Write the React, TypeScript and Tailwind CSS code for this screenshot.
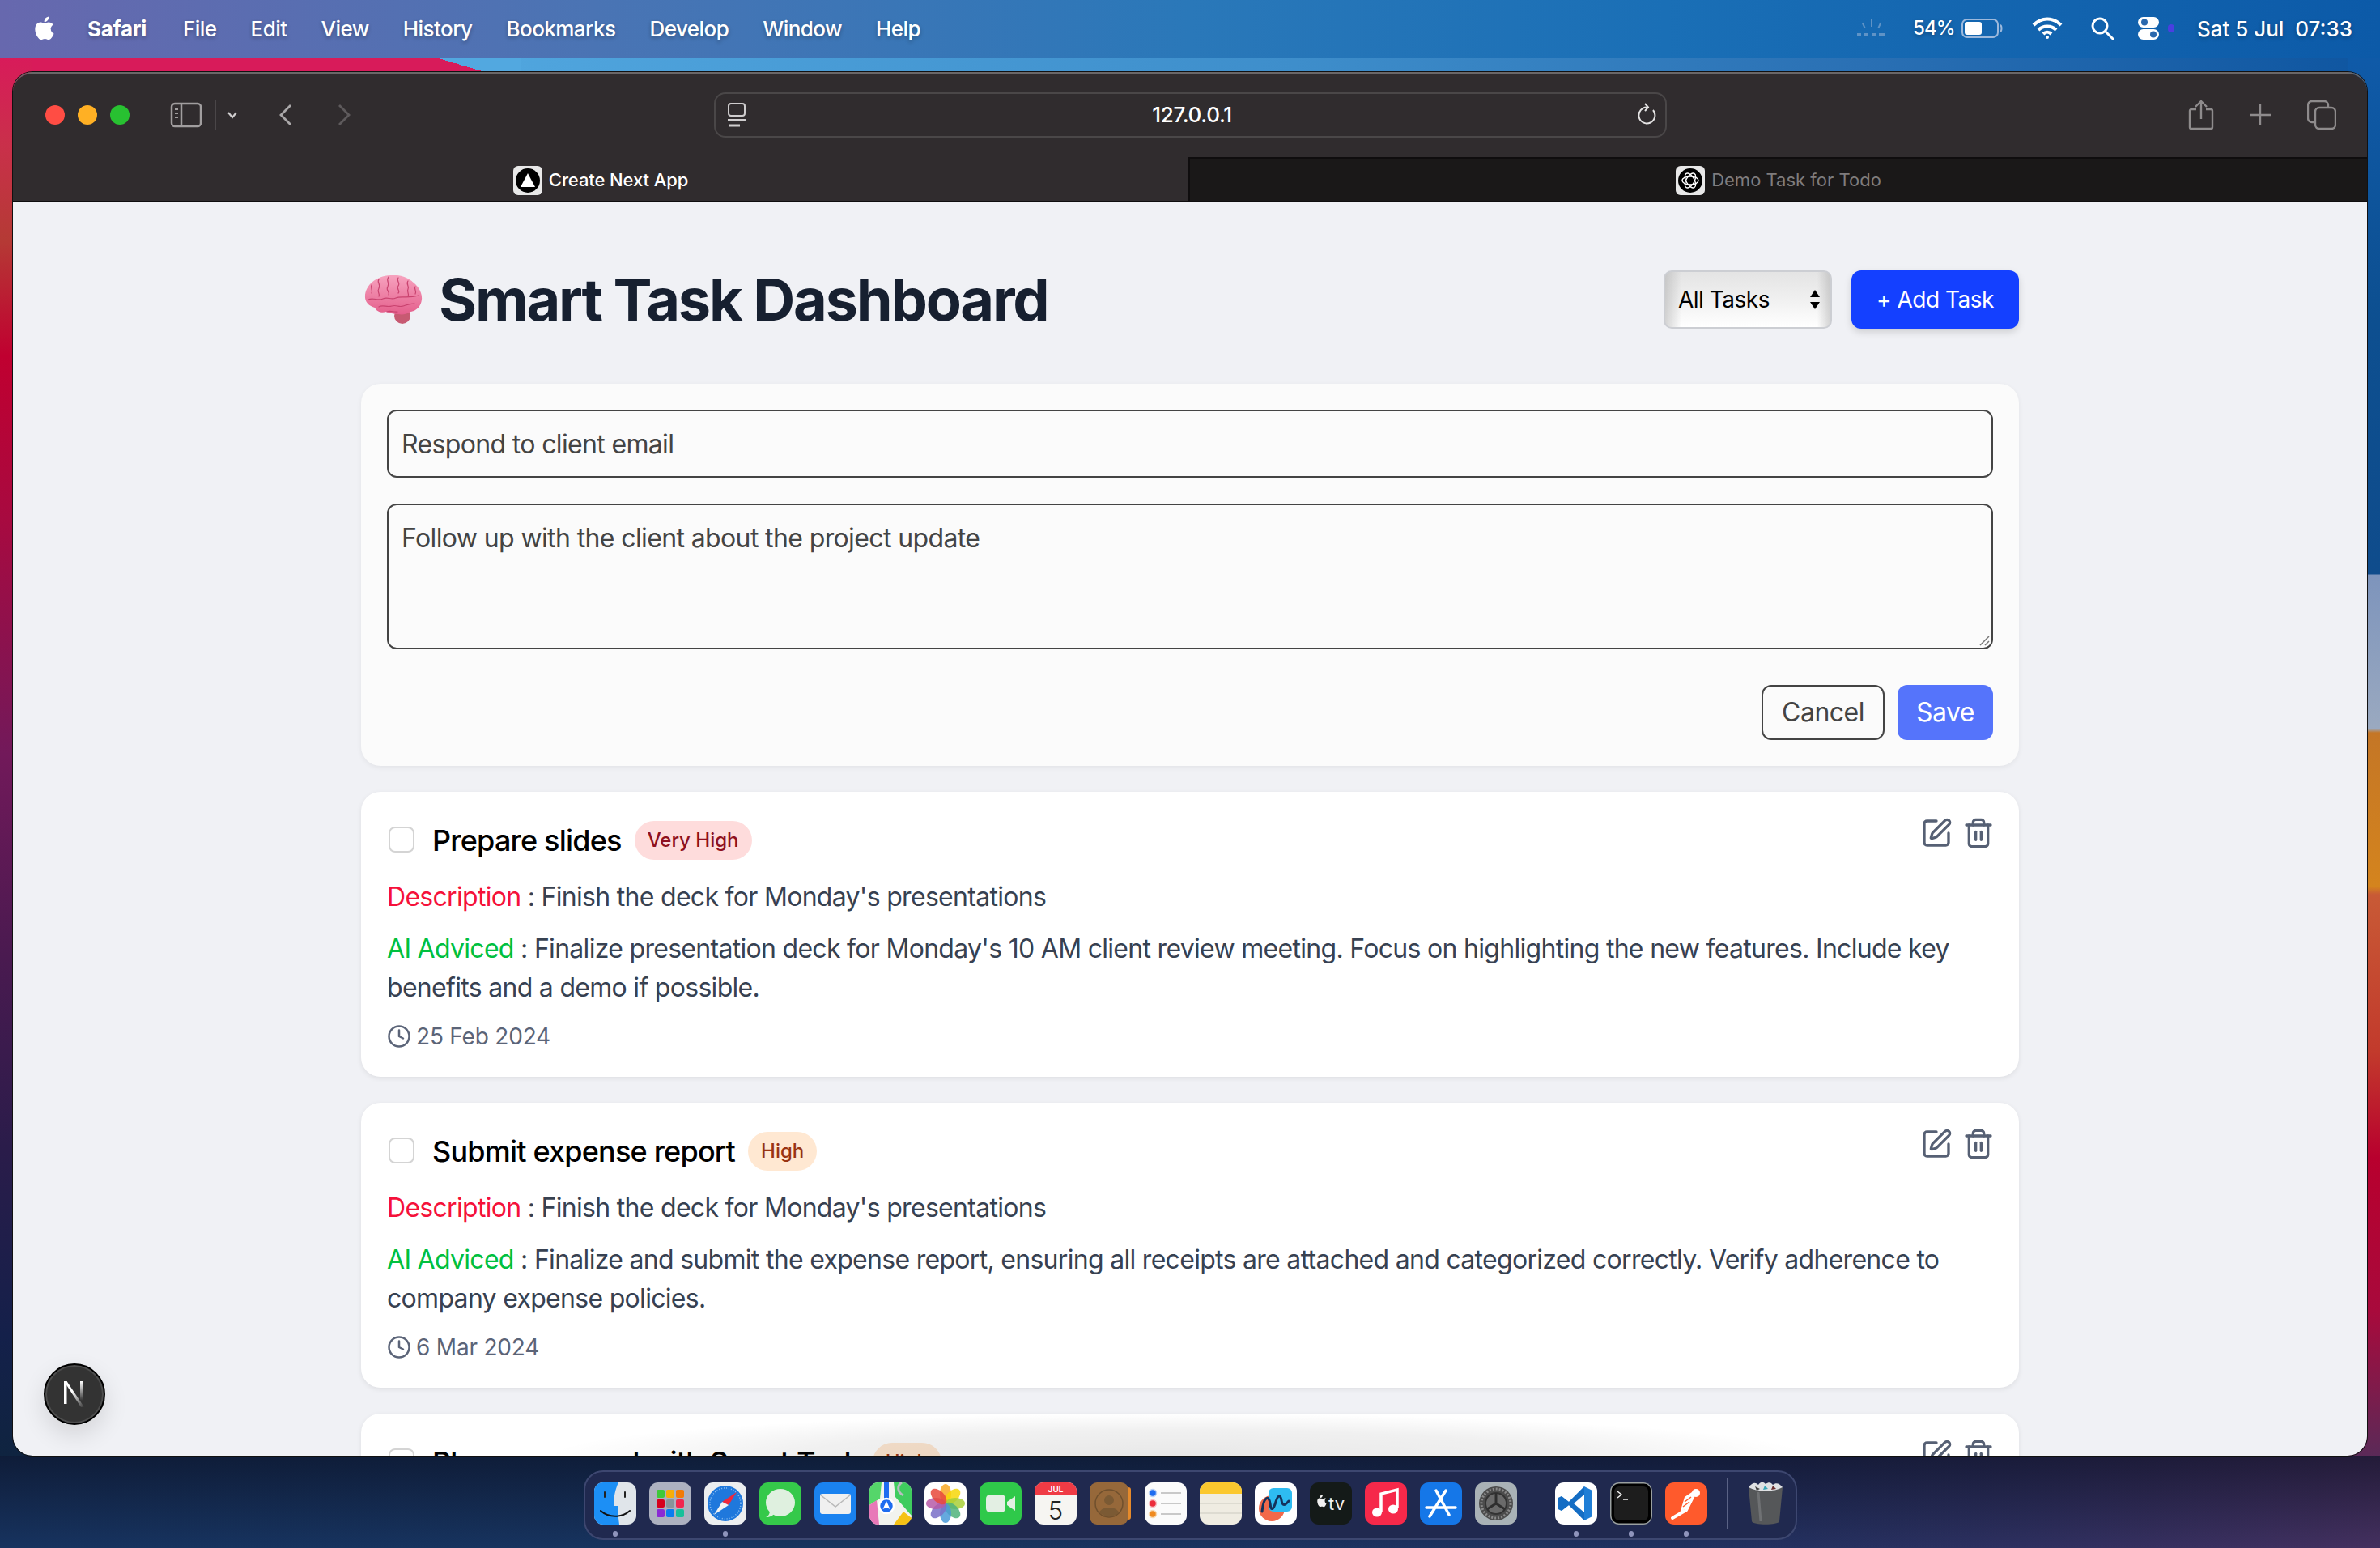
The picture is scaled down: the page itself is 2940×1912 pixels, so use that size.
import React from "react";
import { SquarePen, Trash2, Clock } from "lucide-react";

const menu = ["File", "Edit", "View", "History", "Bookmarks", "Develop", "Window", "Help"];

function Apple() {
  return (
    <svg width="26" height="32" viewBox="0 0 26 32" fill="#fff">
      <path d="M21.6 16.9c0-3.6 3-5.4 3.1-5.5-1.7-2.5-4.3-2.8-5.2-2.9-2.2-.2-4.3 1.3-5.4 1.3-1.1 0-2.9-1.3-4.7-1.3-2.4 0-4.7 1.4-5.9 3.600-2.500 4.400-.6 10.900 1.800 14.400 1.200 1.700 2.600 3.600 4.500 3.600 1.800-.1 2.500-1.200 4.700-1.200s2.800 1.200 4.700 1.100c1.900 0 3.200-1.700 4.400-3.500 1.400-2 1.900-3.900 2-4-.1-.1-3.800-1.500-3.800-5.600z" />
      <path d="M18 6c1-1.200 1.700-2.900 1.500-4.600-1.500.1-3.200 1-4.300 2.200-.9 1.100-1.700 2.800-1.500 4.500 1.700.1 3.300-.9 4.300-2.100z" />
    </svg>
  );
}

function StatusIcons() {
  return (
    <>
      <svg width="38" height="30" viewBox="0 0 38 30" fill="#7fa6cf" className="mr-[32px] opacity-70">
        <rect x="18" y="3" width="2" height="10" />
        <rect x="8" y="8" width="2" height="7" transform="rotate(-25 9 11)" />
        <rect x="28" y="8" width="2" height="7" transform="rotate(25 29 11)" />
        <rect x="1" y="21" width="5" height="4" />
        <rect x="10" y="21" width="5" height="4" />
        <rect x="19" y="21" width="5" height="4" />
        <rect x="28" y="21" width="8" height="4" />
      </svg>
      <span className="text-[24px] font-medium tracking-[-0.8px] text-white">54%</span>
      <svg width="52" height="26" viewBox="0 0 52 26" className="ml-[8px]">
        <rect x="1" y="2" width="44" height="22" rx="6" fill="none" stroke="#9db9dc" strokeWidth="2" />
        <rect x="4" y="5" width="21" height="16" rx="3" fill="#fff" />
        <path d="M48 9c2 1 2 7 0 8" fill="none" stroke="#9db9dc" strokeWidth="2" />
      </svg>
      <svg width="38" height="28" viewBox="0 0 38 28" fill="none" stroke="#fff" strokeWidth="4" className="ml-[35px]">
        <path d="M2 10c10-10 24-10 34 0" />
        <path d="M8 16c6-6 16-6 22 0" />
        <path d="M14 21c3-3 7-3 10 0" />
        <circle cx="19" cy="25" r="2" fill="#fff" stroke="none" />
      </svg>
      <svg width="30" height="30" viewBox="0 0 30 30" fill="none" stroke="#fff" strokeWidth="3" className="ml-[34px]">
        <circle cx="12" cy="12" r="9" />
        <path d="M19 19l9 9" strokeLinecap="round" />
      </svg>
      <svg width="28" height="28" viewBox="0 0 28 28" className="ml-[28px]">
        <rect x="1" y="0" width="26" height="13" rx="6.500" fill="#fff" />
        <circle cx="9" cy="6.500" r="4" fill="#2a68ad" />
        <rect x="1" y="15" width="26" height="13" rx="6.500" fill="#fff" />
        <circle cx="20" cy="21.500" r="4" fill="#2a68ad" />
      </svg>
      <span className="ml-[10px] h-[10px] w-[8px] rounded-full bg-[#4a3fe0]" />
      <span className="ml-[28px] whitespace-pre text-[26px] font-medium text-white">Sat 5 Jul  07:33</span>
    </>
  );
}

function MenuBar() {
  return (
    <div className="flex h-[72px] items-center bg-[linear-gradient(90deg,#6768ae_0%,#4a74b4_25%,#2a78b9_50%,#1a6fb6_70%,#0c5aa8_100%)] pb-[2px] pl-[41px] pr-[34px] [text-shadow:0_2px_5px_rgba(0,0,0,0.3)]">
      <Apple />
      <span className="ml-[41px] text-[26px] font-bold tracking-[-0.3px] text-white">Safari</span>
      <div className="ml-[45px] flex gap-[42px] text-[26px] font-medium tracking-[-0.55px] text-white">
        {menu.map((m) => (
          <span key={m}>{m}</span>
        ))}
      </div>
      <div className="ml-auto flex items-center">
        <StatusIcons />
      </div>
    </div>
  );
}

function Toolbar() {
  return (
    <div className="flex h-[103px] items-center bg-[#302c2e] pb-[2px] pl-[40px] pr-[38px]">
      <span className="h-[24px] w-[24px] rounded-full bg-[#ff4d44]" />
      <span className="ml-[16px] h-[24px] w-[24px] rounded-full bg-[#ffb024]" />
      <span className="ml-[16px] h-[24px] w-[24px] rounded-full bg-[#28c131]" />
      <svg width="40" height="32" viewBox="0 0 40 32" fill="none" stroke="#a19e9f" strokeWidth="2.500" className="ml-[50px]">
        <rect x="2" y="2" width="36" height="28" rx="4" />
        <path d="M14 2v28" />
        <path d="M6 9h4M6 14h4M6 19h4" strokeWidth="2" />
      </svg>
      <span className="ml-[16px] h-[36px] w-px bg-[#4a4648]" />
      <svg width="14" height="10" viewBox="0 0 14 10" fill="none" stroke="#cfcdce" strokeWidth="2.200" className="ml-[13px]">
        <path d="M2 2l5 6 5-6" />
      </svg>
      <svg width="18" height="28" viewBox="0 0 18 28" fill="none" stroke="#aaa8a9" strokeWidth="2.800" className="ml-[50px]">
        <path d="M15 2L3 14l12 12" />
      </svg>
      <svg width="18" height="28" viewBox="0 0 18 28" fill="none" stroke="#5e5a5c" strokeWidth="2.800" className="ml-[54px]">
        <path d="M3 2l12 12L3 26" />
      </svg>
      <div className="ml-[448px] flex h-[56px] w-[1177px] items-center rounded-[14px] border-2 border-[#4a4748] pl-[14px] pr-[10px]">
        <svg width="24" height="30" viewBox="0 0 24 30" fill="none" stroke="#cfcdce" strokeWidth="2">
          <rect x="2" y="1" width="20" height="15" rx="3" />
          <path d="M1 21h22" />
          <path d="M2 28h14" strokeWidth="3" />
        </svg>
        <span className="flex-1 text-center text-[26px] font-medium tracking-[-0.3px] text-white">127.0.0.1</span>
        <svg width="24" height="30" viewBox="0 0 24 30" fill="none" stroke="#e4e3e3" strokeWidth="2">
          <path d="M19 9a10 10 0 1 1-7-3.500" />
          <path d="M9 1l4 4.500-4 4.500" />
        </svg>
      </div>
      <div className="ml-auto flex items-center">
        <svg width="32" height="38" viewBox="0 0 32 38" fill="none" stroke="#8e8b8c" strokeWidth="2.400">
          <path d="M10 12H4a2 2 0 0 0-2 2v20a2 2 0 0 0 2 2h24a2 2 0 0 0 2-2V14a2 2 0 0 0-2-2h-6" />
          <path d="M16 24V2M9 9l7-7 7 7" />
        </svg>
        <svg width="28" height="28" viewBox="0 0 28 28" fill="none" stroke="#8e8b8c" strokeWidth="2.400" className="ml-[43px]">
          <path d="M14 1v26M1 14h26" />
        </svg>
        <svg width="36" height="36" viewBox="0 0 36 36" fill="none" stroke="#8e8b8c" strokeWidth="2.400" className="ml-[44px]">
          <rect x="1" y="1" width="25" height="26" rx="5" />
          <rect x="10" y="9" width="25" height="26" rx="5" fill="#302c2e" />
        </svg>
      </div>
    </div>
  );
}

function Tabs() {
  return (
    <div className="flex h-[56px] border-b-2 border-[#0f0d0e]">
      <div className="flex w-[1452px] items-center justify-center gap-[8px] bg-[#302c2e] pt-[3px]">
        <span className="flex h-[36px] w-[36px] items-center justify-center rounded-[6px] bg-[#e8e8e8]">
          <svg width="32" height="32" viewBox="0 0 32 32">
            <circle cx="16" cy="16" r="15" fill="#000" />
            <path d="M16 7l9 17H7z" fill="#fff" />
          </svg>
        </span>
        <span className="text-[22px] font-medium tracking-[-0.1px] text-white">Create Next App</span>
      </div>
      <div className="flex flex-1 items-center justify-center gap-[8px] border-l-2 border-t-2 border-[#0f0d0e] bg-[#1a1818] pt-[1px]">
        <span className="flex h-[36px] w-[36px] items-center justify-center rounded-[6px] bg-[#e8e8e8]">
          <svg width="32" height="32" viewBox="0 0 32 32" fill="none">
            <circle cx="16" cy="16" r="15" fill="#000" />
            <g stroke="#fff" strokeWidth="1.400">
              <ellipse cx="16" cy="16" rx="10" ry="5" />
              <ellipse cx="16" cy="16" rx="10" ry="5" transform="rotate(60 16 16)" />
              <ellipse cx="16" cy="16" rx="10" ry="5" transform="rotate(120 16 16)" />
            </g>
          </svg>
        </span>
        <span className="text-[22px] text-[#7f7c7d]">Demo Task for Todo</span>
      </div>
    </div>
  );
}

function Brain() {
  return (
    <svg width="72" height="60" viewBox="0 0 72 60">
      <defs>
        <linearGradient id="brainfill" x1="0" y1="0" x2="0" y2="1">
          <stop offset="0" stopColor="#f7a3bf" />
          <stop offset="1" stopColor="#e45f8c" />
        </linearGradient>
      </defs>
      <ellipse cx="47" cy="50" rx="10" ry="10" fill="#c75a72" />
      <path d="M1 28C0 13 14 1 32 0c9-1 18 1 25 6 9 6 15 15 14 24-1 9-7 14-14 15-4 3-10 4-15 3-6 0-11-2-15-3-5 2-12 0-14-5C7 38 2 35 1 28z" fill="url(#brainfill)" />
      <g fill="none" stroke="#c9436f" strokeWidth="1.200" strokeLinecap="round">
        <path d="M30 2c-4 5 2 7-1 12s3 6 1 10" />
        <path d="M18 5c-3 4 3 6 0 11s2 6 0 10" />
        <path d="M9 12c-2 4 2 6 0 10" />
        <path d="M42 3c-3 4 3 6 0 10s3 6 0 9" />
        <path d="M54 7c-3 4 2 6 0 10s2 5 0 9" />
        <path d="M63 14c-2 3 2 5 0 9" />
        <path d="M5 30c6-3 12 2 18-1s10 2 16-1 14 1 28-3" />
        <path d="M18 39c5-3 10 1 16-1s8 2 14 0 8-3 14-3" />
        <path d="M28 45c5-2 8 1 13 0" />
      </g>
    </svg>
  );
}

function Badge({ label, kind }: { label: string; kind: "vh" | "h" }) {
  return (
    <span
      className={
        kind === "vh"
          ? "flex h-[48px] items-center rounded-full bg-[#fedcdc] px-[16px] text-[24px] font-medium text-[#8f1020]"
          : "flex h-[48px] items-center rounded-full bg-[#ffe8d2] px-[16px] text-[24px] font-medium text-[#9a3412]"
      }
    >
      {label}
    </span>
  );
}

function TaskCard({ title, badge, kind, advice, date }: { title: string; badge: string; kind: "vh" | "h"; advice: string; date: string }) {
  return (
    <div className="rounded-[24px] bg-white px-[32px] pb-[30px] pt-[32px] shadow-[0_2px_6px_rgba(0,0,0,0.08)]">
      <div className="flex h-[56px] items-center justify-between">
        <div className="flex items-center">
          <span className="ml-[2px] mt-[-2px] h-[32px] w-[32px] rounded-[8px] border-2 border-[#d4d4d4] bg-white" />
          <span className="ml-[22px] text-[36px] font-medium leading-[56px] tracking-[-0.8px] text-black">{title}</span>
          <span className="ml-[16px]">
            <Badge label={badge} kind={kind} />
          </span>
        </div>
        <div className="mr-[-2px] mt-[-18px] flex items-center gap-[12px] text-[#566074]">
          <SquarePen size={40} strokeWidth={2} />
          <Trash2 size={40} strokeWidth={2} />
        </div>
      </div>
      <p className="mt-[18px] text-[32px] leading-[48px] tracking-[-0.7px] text-[#374151]">
        <span className="text-[#f5113a]">Description</span> : Finish the deck for Monday's presentations
      </p>
      <p className="mt-[16px] text-[32px] leading-[48px] tracking-[-0.7px] text-[#374151]">
        <span className="text-[#00c040]">AI Adviced</span> : {advice}
      </p>
      <div className="mt-[16px] flex h-[40px] items-center gap-[6px] text-[28px] leading-[40px] tracking-[-0.2px] text-[#5b6478]">
        <Clock size={30} strokeWidth={2} />
        <span>{date}</span>
      </div>
    </div>
  );
}

function PageContent() {
  return (
    <div className="relative h-[1548px] overflow-hidden rounded-b-[24px] bg-[#f0f1f5] font-['Inter',sans-serif]">
      <div className="ml-[430px] w-[2048px] pt-[80px]">
        <div className="flex h-[80px] items-center justify-between">
          <div className="flex items-center">
            <span className="ml-[4px]">
              <Brain />
            </span>
            <h1 className="ml-[20px] text-[72px] font-bold leading-[80px] tracking-[-2.2px] text-[#172030]">Smart Task Dashboard</h1>
          </div>
          <div className="flex items-center gap-[24px]">
            <div className="flex h-[72px] w-[208px] items-center justify-between rounded-[10px] border-2 border-[#ccced3] bg-[linear-gradient(90deg,rgba(170,170,170,0.5),transparent_10%,transparent_92%,rgba(170,170,170,0.5)),linear-gradient(180deg,#e4e4e4,#f0f0f0_50%,#ffffff)] pl-[16px] pr-[12px]">
              <span className="text-[28px] tracking-[-0.5px] text-black">All Tasks</span>
              <svg width="14" height="26" viewBox="0 0 14 26" fill="#000">
                <path d="M7 1l6 9H1zM7 25l-6-9h12z" />
              </svg>
            </div>
            <div className="flex h-[72px] w-[207px] items-center justify-center rounded-[12px] bg-[#1440ff] text-[28px] tracking-[-0.5px] text-white shadow-[0_4px_10px_rgba(0,0,0,0.15)]">
              + Add Task
            </div>
          </div>
        </div>
        <div className="mt-[64px] rounded-[24px] bg-[#fbfbfb] p-[32px] shadow-[0_2px_6px_rgba(0,0,0,0.06)]">
          <input
            readOnly
            value="Respond to client email"
            className="block h-[84px] w-full rounded-[12px] border-2 border-[#444] bg-transparent px-[16px] text-[32px] tracking-[-0.65px] text-[#444] outline-none"
          />
          <div className="relative mt-[32px]">
            <textarea
              readOnly
              value="Follow up with the client about the project update"
              className="block h-[180px] w-full resize-none rounded-[12px] border-2 border-[#444] bg-transparent px-[16px] py-[18px] text-[32px] leading-[46px] tracking-[-0.62px] text-[#444] outline-none"
            />
            <svg width="14" height="14" viewBox="0 0 14 14" fill="none" stroke="#777" strokeWidth="1.500" className="absolute bottom-[4px] right-[4px]">
              <path d="M2 13L13 2M8 13l5-5" />
            </svg>
          </div>
          <div className="mt-[44px] flex justify-end gap-[16px]">
            <div className="flex h-[68px] w-[152px] items-center justify-center rounded-[12px] border-2 border-[#444] text-[32px] tracking-[-0.5px] text-[#444]">Cancel</div>
            <div className="flex h-[68px] w-[118px] items-center justify-center rounded-[12px] bg-[#5574fb] text-[32px] tracking-[-0.5px] text-white">Save</div>
          </div>
        </div>
        <div className="mt-[32px] flex flex-col gap-[32px]">
          <TaskCard
            title="Prepare slides"
            badge="Very High"
            kind="vh"
            advice="Finalize presentation deck for Monday's 10 AM client review meeting. Focus on highlighting the new features. Include key benefits and a demo if possible."
            date="25 Feb 2024"
          />
          <TaskCard
            title="Submit expense report"
            badge="High"
            kind="h"
            advice="Finalize and submit the expense report, ensuring all receipts are attached and categorized correctly. Verify adherence to company expense policies."
            date="6 Mar 2024"
          />
          <TaskCard
            title="Please proceed with Smart Task"
            badge="High"
            kind="h"
            advice="Finalize and submit the expense report, ensuring all receipts are attached."
            date="8 Mar 2024"
          />
        </div>
      </div>
      <div className="absolute bottom-0 left-[660px] h-[52px] w-[1560px] bg-[radial-gradient(ellipse_780px_52px_at_50%_100%,rgba(0,0,0,0.09),rgba(0,0,0,0.06)_60%,transparent)]" />
      <div className="absolute bottom-[38px] left-[38px] flex h-[76px] w-[76px] items-center justify-center rounded-full border-2 border-black bg-[#333] shadow-[inset_0_0_0_2px_#4d4d4d,0_12px_30px_rgba(0,0,0,0.12)]">
        <svg width="30" height="36" viewBox="0 0 30 36">
          <defs>
            <linearGradient id="nextfade" x1="0" y1="0" x2="1" y2="1">
              <stop offset="0.4" stopColor="#fff" />
              <stop offset="1" stopColor="#fff" stopOpacity="0" />
            </linearGradient>
            <linearGradient id="nextbar" x1="0" y1="0" x2="0" y2="1">
              <stop offset="0" stopColor="#fff" />
              <stop offset="1" stopColor="#fff" stopOpacity="0" />
            </linearGradient>
          </defs>
          <path d="M2 2h3.500v28H2z" fill="#fff" />
          <path d="M2 2h3.500L27 34h-4z" fill="url(#nextfade)" />
          <path d="M22 2h3.500v24H22z" fill="url(#nextbar)" />
        </svg>
      </div>
    </div>
  );
}

type IconProps = { children: React.ReactNode; dot?: boolean };

function DockItem({ children, dot }: IconProps) {
  return (
    <div className="relative h-[52px] w-[52px] shrink-0">
      <svg width="52" height="52" viewBox="0 0 52 52">
        {children}
      </svg>
      {dot ? <span className="absolute bottom-[-15px] left-[23px] h-[7px] w-[6px] rounded-full bg-[#8f94bb]" /> : null}
    </div>
  );
}

function Dock() {
  return (
    <div className="mx-auto mt-[18px] flex h-[86px] w-[1499px] items-center rounded-[24px] border-2 border-[#3d4770] bg-[#20294f] pb-[4px] pl-[11px] pr-[12px]">
      <div className="flex gap-[16px]">
        <DockItem dot>
          <rect width="52" height="52" rx="11" fill="#e0e5ea" />
          <path d="M11 0h19c-4 9-6 17-6 29h5c0 8 1 15 2 23H11A11 11 0 0 1 0 41V11A11 11 0 0 1 11 0z" fill="#1c8ff5" />
          <path d="M13 12v6M38 12v6" stroke="#222" strokeWidth="2" strokeLinecap="round" />
          <path d="M8 35c10 9 26 9 36 0" stroke="#111" strokeWidth="2" fill="none" strokeLinecap="round" />
        </DockItem>
        <DockItem>
          <rect width="52" height="52" rx="11" fill="#adb1c0" />
          {[
            [9, 9, "#3ec83a"], [21, 9, "#f6ad09"], [33, 9, "#f27a07"],
            [9, 21, "#d6001c"], [21, 21, "#87939a"], [33, 21, "#f0264f"],
            [9, 33, "#8a2bd4"], [21, 33, "#0a7df0"], [33, 33, "#18c09a"],
          ].map(([x, y, c]) => (
            <rect key={`${x}-${y}`} x={x as number} y={y as number} width="10" height="10" rx="2" fill={c as string} />
          ))}
        </DockItem>
        <DockItem dot>
          <rect width="52" height="52" rx="11" fill="#eceef0" />
          <circle cx="26" cy="26" r="22" fill="#1f78dc" />
          <circle cx="26" cy="26" r="19" fill="none" stroke="#8fc0f0" strokeWidth="1.500" strokeDasharray="1 2" />
          <path d="M40 12L22 24l8 4z" fill="#f0283c" />
          <path d="M12 40l18-12-8-4z" fill="#f2f2f2" />
        </DockItem>
        <DockItem>
          <rect width="52" height="52" rx="11" fill="#35c94a" />
          <ellipse cx="26" cy="25" rx="18" ry="17" fill="#dff0df" />
          <path d="M13 34c0 5-2 8-5 9 5 0 9-2 11-5z" fill="#dff0df" />
        </DockItem>
        <DockItem>
          <rect width="52" height="52" rx="11" fill="#1a82f0" />
          <rect x="7" y="14" width="38" height="25" rx="3" fill="#f0f0f0" />
          <path d="M7 15l19 15 19-15" fill="none" stroke="#b9b9b9" strokeWidth="1.500" />
        </DockItem>
        <DockItem>
          <rect width="52" height="52" rx="11" fill="#f2f3ee" />
          <path d="M30 0h11a11 11 0 0 1 11 11v30l-20-23z" fill="#3fcc5e" />
          <path d="M0 11A11 11 0 0 1 11 0h4L13 20 0 28z" fill="#55d66a" />
          <path d="M0 28l9-6 3 30H11A11 11 0 0 1 0 41z" fill="#e878b8" />
          <path d="M18 0h6v22h-6z" fill="#1e6cf0" />
          <path d="M30 52l12-16 10 8a11 11 0 0 1-11 8z" fill="#f6c215" />
          <circle cx="21" cy="29" r="9" fill="#1e6cf0" stroke="#fff" strokeWidth="2.500" />
          <path d="M21 23l4.500 10-4.500-2-4.500 2z" fill="#fff" />
          <path d="M40 0c-6 4-6 12 2 16" fill="none" stroke="#b9bdc0" strokeWidth="3" />
        </DockItem>
        <DockItem>
          <rect width="52" height="52" rx="11" fill="#fff" />
          {["#f9a825", "#f7d708", "#a8cf38", "#4fb37a", "#4a9ad8", "#7a70c8", "#b65aa8", "#e8483c"].map((c, i) => (
            <ellipse key={c} cx="26" cy="14" rx="7" ry="12" fill={c} opacity="0.85" transform={`rotate(${i * 45} 26 26)`} />
          ))}
        </DockItem>
        <DockItem>
          <rect width="52" height="52" rx="11" fill="#2fc94a" />
          <rect x="8" y="15" width="24" height="22" rx="5" fill="#e3efe3" />
          <path d="M34 24l10-7v18l-10-7z" fill="#e3efe3" />
        </DockItem>
        <DockItem>
          <rect width="52" height="52" rx="11" fill="#f6f5f2" />
          <path d="M0 16V11A11 11 0 0 1 11 0h30a11 11 0 0 1 11 11v5z" fill="#ef3b45" />
          <text x="26" y="12" textAnchor="middle" fontSize="10" fontWeight="600" fontFamily="Inter" fill="#fff">JUL</text>
          <text x="26" y="46" textAnchor="middle" fontSize="31" fontWeight="300" fontFamily="Inter" fill="#222">5</text>
        </DockItem>
        <DockItem>
          <path d="M46 6h2a3 3 0 0 1 3 3v34a3 3 0 0 1-3 3h-2z" fill="#e58a2b" />
          <rect width="48" height="52" rx="9" fill="#96683a" />
          <circle cx="24" cy="26" r="17" fill="none" stroke="#70502d" strokeWidth="1.500" />
          <circle cx="24" cy="22" r="6" fill="#7b5a34" />
          <path d="M12 37c3-8 21-8 24 0a17 17 0 0 1-24 0z" fill="#7b5a34" />
        </DockItem>
        <DockItem>
          <rect width="52" height="52" rx="11" fill="#fbfbfb" />
          <circle cx="10" cy="13" r="4.500" fill="#1e6cf0" stroke="#b8d0f5" strokeWidth="1.500" />
          <circle cx="10" cy="26" r="4.500" fill="#ec2d3c" stroke="#f6c0c4" strokeWidth="1.500" />
          <circle cx="10" cy="39" r="4.500" fill="#ef8a1f" stroke="#f7d8b0" strokeWidth="1.500" />
          <path d="M20 13h25M20 26h25M20 39h25" stroke="#c9c9c9" strokeWidth="2" />
        </DockItem>
        <DockItem>
          <rect width="52" height="52" rx="11" fill="#efece2" />
          <path d="M0 14V11A11 11 0 0 1 11 0h30a11 11 0 0 1 11 11v3z" fill="#fbc82e" />
          <path d="M0 26h52M0 38h52" stroke="#d8d5cb" strokeWidth="1.500" />
        </DockItem>
        <DockItem>
          <rect width="52" height="52" rx="11" fill="#fff" />
          <circle cx="21" cy="32" r="16" fill="#f2694a" />
          <rect x="17" y="7" width="29" height="29" rx="6" fill="#2ebcf2" />
          <path d="M9 36c2-20 9-20 10-10s4 8 7-2 6-8 7-2 3 8 9 1" fill="none" stroke="#14325c" strokeWidth="3" strokeLinecap="round" />
        </DockItem>
        <DockItem>
          <rect width="52" height="52" rx="11" fill="#141a18" />
          <text x="33" y="34" textAnchor="middle" fontSize="22" fontFamily="Inter" fill="#f0f0f0">tv</text>
          <path d="M13 19c-1-2 1-4 3-4 0 2-1 4-3 4zM16 20c2 0 3-1 4 0-2 1-2 5 .5 6-1 3-2.500 5-4 4-1-.5-2-.5-3 0-3 1-6-8-3-10 1.500-1 3 .2 5.500 0z" fill="#f0f0f0" />
        </DockItem>
        <DockItem>
          <rect width="52" height="52" rx="11" fill="#f6294a" />
          <path d="M20 36V14l20-5v23" fill="none" stroke="#fff" strokeWidth="3.500" />
          <ellipse cx="15" cy="37" rx="6" ry="5.500" fill="#fff" />
          <ellipse cx="35" cy="33" rx="6" ry="5.500" fill="#fff" />
        </DockItem>
        <DockItem>
          <rect width="52" height="52" rx="11" fill="#1577e8" />
          <path d="M20 10l16 30M32 10L12 42M8 31h36" stroke="#fff" strokeWidth="3.500" strokeLinecap="round" />
        </DockItem>
        <DockItem>
          <rect width="52" height="52" rx="11" fill="#a9b2b6" />
          <circle cx="26" cy="26" r="21" fill="#4c4c4c" />
          <circle cx="26" cy="26" r="18" fill="none" stroke="#8a8a8a" strokeWidth="3" strokeDasharray="2 2" />
          <circle cx="26" cy="26" r="13" fill="#6a6a6a" stroke="#333" strokeWidth="2" />
          <path d="M26 26V13M26 26l11 7M26 26l-11 7" stroke="#2e2e2e" strokeWidth="3" />
        </DockItem>
      </div>
      <span className="mx-[23px] h-[62px] w-px bg-[#5a6285]" />
      <div className="flex gap-[16px]">
        <DockItem dot>
          <rect width="52" height="52" rx="11" fill="#fff" />
          <path d="M36 5l10 5v32l-10 5L17 28l-9 7-4-2V19l4-2 9 7z" fill="#1f7ed6" />
          <path d="M36 5l-19 19-9-7-4 2v14l4 2 9-7 19 19z" fill="#0d63b8" opacity="0.6" />
          <path d="M36 15L23 26l13 11z" fill="#fff" />
        </DockItem>
        <DockItem dot>
          <rect width="52" height="52" rx="11" fill="#9aa0a0" />
          <rect x="1.500" y="1.500" width="49" height="49" rx="9" fill="#000" />
          <rect x="5" y="5" width="42" height="42" rx="6" fill="#1d1d1d" />
          <path d="M9 11l5 4-5 4" fill="none" stroke="#eee" strokeWidth="1.500" />
          <path d="M16 21h6" stroke="#eee" strokeWidth="1.500" />
        </DockItem>
        <DockItem dot>
          <rect width="52" height="52" rx="11" fill="#ff5a2c" />
          <path d="M9 44l17-10 11-22" fill="none" stroke="#fff" strokeWidth="4" strokeLinecap="round" />
          <path d="M18 38l6-20 12-8-4 16z" fill="#fff" />
          <circle cx="38" cy="13" r="5" fill="#fff" />
          <path d="M22 30l8-6M24 24l8-6" stroke="#ff5a2c" strokeWidth="1.500" />
        </DockItem>
      </div>
      <span className="mx-[24px] h-[62px] w-px bg-[#5a6285]" />
      <svg width="46" height="56" viewBox="0 0 46 56" className="shrink-0">
        <path d="M2 8c10 5 32 5 42 0l-4 42c-1 5-33 5-34 0z" fill="#555759" />
        <path d="M14 14l3 36" stroke="#6f7173" strokeWidth="3" />
        <path d="M2 8c4-5 8-7 12-3 3-4 6-4 9-1 4-3 7-2 9 1 4-3 8-2 12 3-10 6-32 6-42 0z" fill="#dfe1e3" />
        <path d="M10 7l6 3-4 2z" fill="#444" />
        <path d="M22 6l4 4-6 1z" fill="#3aa7b8" />
        <path d="M32 6l4 4-6 1z" fill="#6a2e2e" />
      </svg>
    </div>
  );
}

export default function App() {
  return (
    <div className="h-[1912px] w-[2940px] overflow-hidden font-['Inter',sans-serif] [background:linear-gradient(180deg,#d81b5a_72px,#c9304a_180px,#b53a35_296px,#c00030_440px,#a80a40_640px,#72195a_930px,#4a1a50_1180px,#2a1c4a_1420px,#14204a_1650px,#0f2440_1800px,#0f2440_100%)_left_top/40px_1798px_no-repeat,linear-gradient(180deg,#0f5aa8_72px,#0d4f90_400px,#0f4c8c_709px,#7d94bc_710px,#9aa9c0_900px,#c47626_905px,#d4841e_1095px,#c85a36_1105px,#c23a2c_1300px,#b8002e_1430px,#a80a3c_1620px,#5a2a58_1800px,#3a2a55_100%)_right_top/40px_1798px_no-repeat,linear-gradient(16.6deg,#d81b5a_50%,#52a8e0_50%)_500px_72px/144px_18px_no-repeat,linear-gradient(90deg,#d81b5a_500px,#52a8e0_500px,#3e8ecb_1600px,#2a70b4_2300px,#0e55a0_2940px)_left_72px/100%_60px_no-repeat,linear-gradient(180deg,rgba(8,10,25,0.55),rgba(8,10,25,0)_114px)_left_1798px/100%_114px_no-repeat,linear-gradient(90deg,#17335f_0%,#17345f_40%,#1f3160_70%,#2e3060_85%,#44305f_100%)_left_1798px/100%_114px_no-repeat,#17335f]">
      <MenuBar />
      <div className="ml-[16px] mt-[17px] w-[2908px] overflow-hidden rounded-[24px] border-t-2 border-[#6a6768] shadow-[0_0_0_1px_#111]">
        <Toolbar />
        <Tabs />
        <PageContent />
      </div>
      <Dock />
    </div>
  );
}
